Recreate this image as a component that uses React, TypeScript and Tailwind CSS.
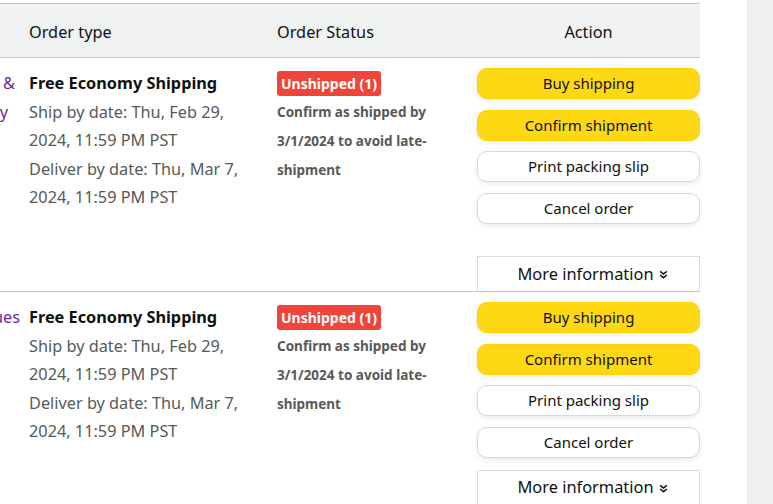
import { ReactNode } from "react";

const font = { fontFamily: '"Noto Sans", "Open Sans", Arial, sans-serif' };

type Order = {
  cut: { text: string; pad: string }[];
  tall?: boolean;
};

const orders: Order[] = [
  {
    cut: [
      { text: "&", pad: "pr-[14px]" },
      { text: "y", pad: "pr-[21px]" },
    ],
    tall: true,
  },
  { cut: [{ text: "ues", pad: "pr-[9px]" }] },
];

function ActionButton({ children, yellow }: { children: ReactNode; yellow?: boolean }) {
  return (
    <button
      className={
        yellow
          ? "flex h-[31px] w-full items-center justify-center rounded-[10px] border border-[#fcd200] bg-[#ffd814] text-[15px] text-[#0f1111] shadow-[0_2px_5px_rgba(213,217,217,0.5)]"
          : "flex h-[31px] w-full items-center justify-center rounded-[10px] border border-[#d5d9d9] bg-white text-[15px] text-[#0f1111] shadow-[0_2px_5px_rgba(213,217,217,0.5)]"
      }
    >
      {children}
    </button>
  );
}

function ChevronDouble() {
  return (
    <svg width="9" height="9" viewBox="0 0 9 9" className="ml-[5px] mt-[1px]">
      <path d="M1.2 1.3 L4.5 4 L7.8 1.3 M1.2 5 L4.5 7.7 L7.8 5" fill="none" stroke="#0f1111" strokeWidth="1.5" />
    </svg>
  );
}

function OrderRow({ order }: { order: Order }) {
  return (
    <div
      className={
        order.tall
          ? "flex h-[234px] w-[700px] border-b border-[#c4c4c4]"
          : "flex w-[700px] border-b border-[#c4c4c4]"
      }
    >
      <div className="w-[29px] shrink-0 overflow-hidden pt-[11px] text-[16.3px] leading-[28.6px] text-[#6b2aa0]">
        {order.cut.map((c, i) => (
          <div key={i} className={`flex justify-end whitespace-nowrap ${c.pad}`}>
            {c.text}
          </div>
        ))}
      </div>

      <div className="w-[248px] shrink-0 pt-[11px] text-[16.3px] leading-[28.6px] text-[#565959]">
        <div className="font-bold text-[#0f1111]">Free Economy Shipping</div>
        <div>Ship by date: Thu, Feb 29,</div>
        <div>2024, 11:59 PM PST</div>
        <div>Deliver by date: Thu, Mar 7,</div>
        <div>2024, 11:59 PM PST</div>
      </div>

      <div className="w-[200px] shrink-0 pt-[13px]">
        <span className="inline-flex h-[25px] items-center rounded-[3px] bg-[#f1443b] px-[4px] text-[14px] font-bold text-white">
          Unshipped (1)
        </span>
        <div className="mt-[2px] pr-[26px] text-[13.5px] font-bold leading-[29px] text-[#565959]">
          Confirm as shipped by 3/1/2024 to avoid late-shipment
        </div>
      </div>

      <div className="flex w-[223px] shrink-0 flex-col pt-[10px]">
        <div className="flex flex-col gap-[10.5px]">
          <ActionButton yellow>Buy shipping</ActionButton>
          <ActionButton yellow>Confirm shipment</ActionButton>
          <ActionButton>Print packing slip</ActionButton>
          <ActionButton>Cancel order</ActionButton>
        </div>
        <div className="min-h-[12px] flex-1" />
        <div className="flex h-[35px] items-center justify-center border-x border-t border-[#dddddd] pl-[8px] text-[16.4px] text-[#0f1111]">
          More information
          <ChevronDouble />
        </div>
      </div>
    </div>
  );
}

export default function App() {
  return (
    <div className="flex h-[504px] w-[773px] overflow-hidden bg-white" style={font}>
      <div className="w-[747px] shrink-0 pt-[3px]">
        <div className="flex h-[55px] w-[700px] items-center border-y border-[#c4c4c4] bg-[#f0f2f2] pt-[3px] text-[16.3px] text-[#0f1111]">
          <div className="w-[29px] shrink-0" />
          <div className="w-[248px] shrink-0">Order type</div>
          <div className="w-[200px] shrink-0">Order Status</div>
          <div className="w-[223px] shrink-0 text-center">Action</div>
        </div>
        {orders.map((o, i) => (
          <OrderRow key={i} order={o} />
        ))}
      </div>
      <div className="flex-1 bg-[#efefef]" />
    </div>
  );
}
